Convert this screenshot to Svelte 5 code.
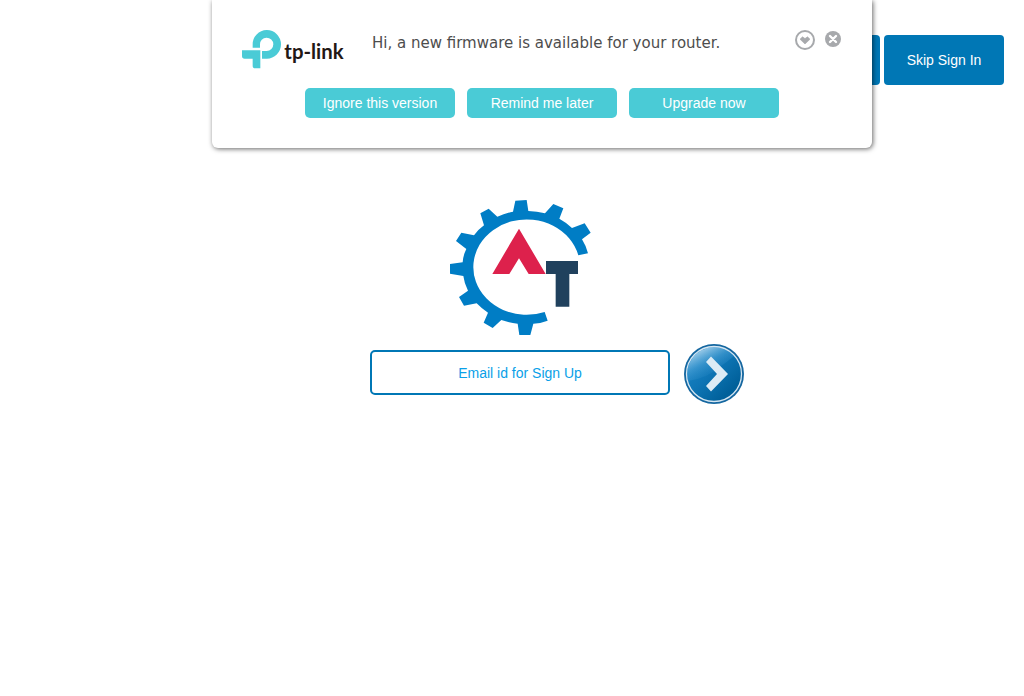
<script>
  let noticeOpen = $state(true);
  let email = $state('');
  const dismiss = () => (noticeOpen = false);
  const actions = ['Ignore this version', 'Remind me later', 'Upgrade now'];
</script>

<header class="topbar">
  <button class="primary" type="button">Sign In</button>
  <button class="primary" type="button">Skip Sign In</button>
</header>

{#if noticeOpen}
  <section class="notice" aria-label="Firmware update">
    <div class="notice-head">
      <svg class="brand" viewBox="0 9 315 135" role="img" aria-label="tp-link">
        <g fill="#4acbd6">
          <path d="M32 62V53A42.500 43 0 1 1 74 95H60V72H74A20 20 0 1 0 54 53V62Z" />
          <path d="M0 70H55V124H40Q32 124 32 116V95H8Q0 95 0 87Z" />
        </g>
        <text x="127" y="95" font-size="61">tp-link</text>
      </svg>
      <p>Hi, a new firmware is available for your router.</p>
      <div class="tools">
        <button type="button" aria-label="Minimize" onclick={dismiss}>
          <svg class="minimize" viewBox="0 0 20 20">
            <circle cx="10" cy="10" r="9" fill="#fff" stroke="#a7a9ac" stroke-width="2" />
            <path d="M5 9.200L7.500 6.800L10 8.600L12.500 6.800L15 9.200L10 14Z" fill="#a7a9ac" stroke="#a7a9ac" stroke-width=".6" stroke-linejoin="round" />
          </svg>
        </button>
        <button type="button" aria-label="Close" onclick={dismiss}>
          <svg class="close" viewBox="0 0 16 16">
            <circle cx="8" cy="8" r="8" fill="#a7a9ac" />
            <path d="M5 5L11 11M11 5L5 11" stroke="#fff" stroke-width="2.400" stroke-linecap="round" />
          </svg>
        </button>
      </div>
    </div>
    <div class="actions">
      {#each actions as label}
        <button type="button" onclick={dismiss}>{label}</button>
      {/each}
    </div>
  </section>
{/if}

<main>
  <svg class="logo" viewBox="30 30 423 405" role="img" aria-label="AT">
    <path
      fill="#007dc5"
      d="M226 32L260 30L265 63Q291 64 315 70L340 42L370 55L358 86Q380 98 396 114L434 100L452 128L426 148Q438 167 444 190L415 196A160 143 0 1 0 314 366L323 392Q303 400 280 401L271 435H238L233 401Q208 398 184 390L158 414L131 398L144 368Q125 356 110 340L72 347L57 321L84 302Q73 281 70 258L30 251V222L68 217Q69 197 79 177L48 153L64 128L102 136Q114 119 132 106L121 70L146 56L172 80Q195 70 219 65Z"
    />
    <path fill="#dd214c" d="M237 116L317 252H266L237 205L208 252H157Z" />
    <path fill="#20415d" d="M318 213H414V252H388V350H347V252H318Z" />
  </svg>
  <form onsubmit={(e) => e.preventDefault()}>
    <input type="email" aria-label="Email id for Sign Up" placeholder="Email id for Sign Up" bind:value={email} />
    <button class="go" type="submit" aria-label="Continue">
      <svg viewBox="0 0 60 60">
        <defs>
          <linearGradient id="disc" x1=".1" y1=".1" x2=".8" y2=".8">
            <stop offset="0" stop-color="#1c86c8" />
            <stop offset=".5" stop-color="#0f76b6" />
            <stop offset="1" stop-color="#00609a" />
          </linearGradient>
          <linearGradient id="gloss" x1=".1" y1=".05" x2=".65" y2=".8">
            <stop offset="0" stop-color="#fff" stop-opacity=".8" />
            <stop offset=".55" stop-color="#70b9e5" stop-opacity=".35" />
            <stop offset="1" stop-color="#2589c8" stop-opacity=".12" />
          </linearGradient>
        </defs>
        <circle cx="30" cy="30" r="30" fill="#1567a0" />
        <circle cx="30" cy="30" r="27.500" fill="url(#disc)" stroke="#d5e6f2" stroke-width="1.300" />
        <path d="M4 37A27 27 0 0 1 50 12Q43 18 37 22Q24 34 4 37Z" fill="url(#gloss)" />
        <path d="M27 12.500L44 30L27 47.500L22 42L33 30L22 18Z" fill="#dcebf5" />
      </svg>
    </button>
  </form>
</main>

<style>
  :global(body) {
    background: #fff;
  }
  button,
  input {
    font-family: 'Liberation Sans', Arial, sans-serif;
    font-size: 14px;
    box-sizing: border-box;
  }
  button {
    border: 0;
    padding: 0;
    cursor: pointer;
  }
  svg {
    display: block;
  }
  .topbar {
    display: flex;
    justify-content: flex-end;
    gap: 4px;
    padding: 35px 20px 0;
  }
  .primary {
    width: 120px;
    height: 50px;
    border-radius: 4px;
    background: #0077b5;
    color: #fff;
  }
  .notice {
    position: absolute;
    z-index: 1;
    top: 0;
    left: calc(50% - 300px);
    width: 660px;
    padding: 30px;
    box-sizing: border-box;
    border-radius: 0 0 6px 6px;
    background: #fff;
    box-shadow: 1px 1px 5px rgba(0, 0, 0, 0.6);
  }
  .notice-head {
    display: flex;
    align-items: flex-start;
    height: 58px;
  }
  .brand {
    width: 105px;
    height: 45px;
    overflow: visible;
  }
  .brand text {
    font-family: Lato, sans-serif;
    font-weight: 700;
    fill: #231815;
  }
  .notice p {
    flex: 1;
    margin: 0 0 0 25px;
    font: 15px/26px 'DejaVu Sans', Verdana, sans-serif;
    color: #4d4d4d;
    white-space: nowrap;
  }
  .tools {
    display: flex;
    align-items: flex-start;
    gap: 10px;
    padding-right: 1px;
  }
  .tools button {
    background: none;
  }
  .minimize {
    width: 20px;
    height: 20px;
  }
  .close {
    width: 16px;
    height: 16px;
    margin-top: 1px;
  }
  .actions {
    display: flex;
    justify-content: center;
    gap: 12px;
  }
  .actions button {
    width: 150px;
    height: 30px;
    border-radius: 5px;
    background: #4acbd6;
    color: #fff;
  }
  main {
    display: flex;
    flex-direction: column;
    align-items: center;
    padding: 115px 0 0 16px;
  }
  .logo {
    width: 141px;
    height: 135px;
  }
  form {
    display: grid;
    grid-template-columns: 1fr 300px 1fr;
    align-items: start;
    gap: 14px;
    width: 100%;
    margin-top: 9px;
  }
  input {
    grid-column: 2;
    height: 45px;
    margin: 6px 0 0;
    border: 2px solid #0077b5;
    border-radius: 5px;
    background: #fff;
    text-align: center;
    color: #0077b5;
  }
  input::placeholder {
    color: #0a9fe8;
    opacity: 1;
  }
  .go {
    width: 60px;
    height: 60px;
    border-radius: 50%;
    background: none;
  }
  .go svg {
    width: 60px;
    height: 60px;
  }
</style>
